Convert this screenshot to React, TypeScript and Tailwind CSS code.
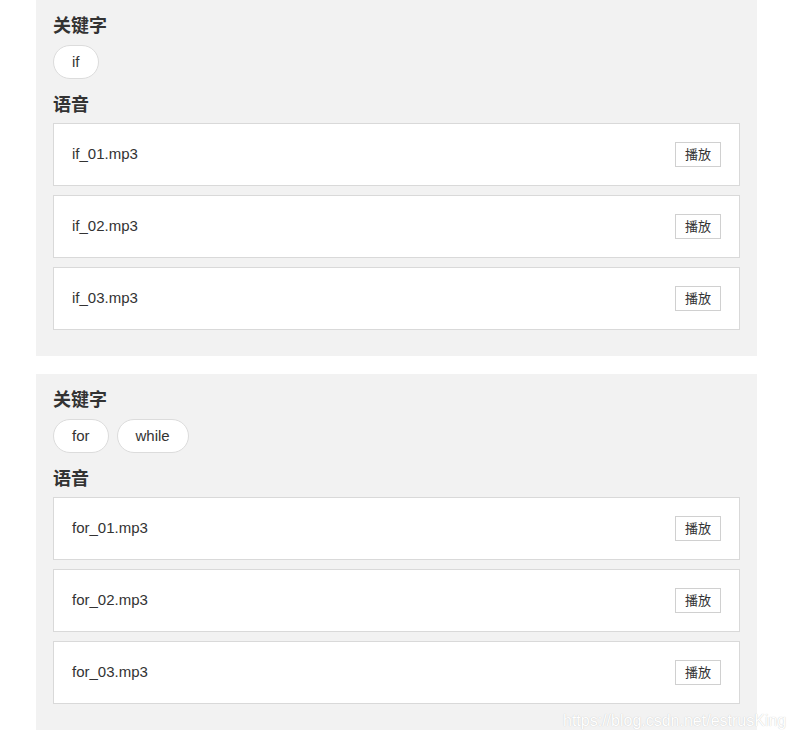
import React from "react";

// ── Data ──────────────────────────────────────────────────────────────────────

type Group = { keywords: string[]; audios: string[] };

const groups: Group[] = [
  { keywords: ["if"], audios: ["if_01.mp3", "if_02.mp3", "if_03.mp3"] },
  { keywords: ["for", "while"], audios: ["for_01.mp3", "for_02.mp3", "for_03.mp3"] },
];

const FONT = "font-['Liberation_Sans','Noto_Sans_CJK_SC',sans-serif]";

// ── Subcomponents ─────────────────────────────────────────────────────────────

function SectionTitle({ children, className = "" }: { children: React.ReactNode; className?: string }) {
  return (
    <h3 className={`h-[25px] leading-[25px] text-[18px] font-bold text-[#333] ${className}`}>{children}</h3>
  );
}

function AudioRow({ name }: { name: string }) {
  return (
    <div className="flex h-[63px] items-center justify-between border border-[#d9d9d9] bg-white pl-[18px] pr-[18px]">
      <span className="text-[15px] text-[#333]">{name}</span>
      <button
        type="button"
        className="h-[25px] border border-[#d0d0d0] bg-white px-[9px] text-[13px] leading-[23px] text-[#333]"
      >
        播放
      </button>
    </div>
  );
}

function GroupCard({ group }: { group: Group }) {
  return (
    <div className="bg-[#f2f2f2] px-[17px] pt-[14px] pb-[26px]">
      <SectionTitle>关键字</SectionTitle>
      <div className="mt-[6px] flex gap-[8px]">
        {group.keywords.map((k) => (
          <span
            key={k}
            className="flex h-[34px] items-center rounded-full border border-[#dcdcdc] bg-white px-[18px] text-[15px] text-[#333]"
          >
            {k}
          </span>
        ))}
      </div>
      <SectionTitle className="mt-[14px]">语音</SectionTitle>
      <div className="mt-[5px] flex flex-col gap-[9px]">
        {group.audios.map((a) => (
          <AudioRow key={a} name={a} />
        ))}
      </div>
    </div>
  );
}

// ── Page ──────────────────────────────────────────────────────────────────────

export default function App() {
  return (
    <div className={`relative h-[740px] w-[793px] overflow-hidden bg-white ${FONT}`}>
      <div className="ml-[36px] flex w-[721px] flex-col gap-[18px]">
        {groups.map((g, i) => (
          <GroupCard key={i} group={g} />
        ))}
      </div>
      <span className="absolute left-[563px] top-[709px] whitespace-nowrap text-[16px] leading-[24px] text-white [text-shadow:0_0_1px_#bdbdbd]">
        https://blog.csdn.net/estrusKing
      </span>
    </div>
  );
}
